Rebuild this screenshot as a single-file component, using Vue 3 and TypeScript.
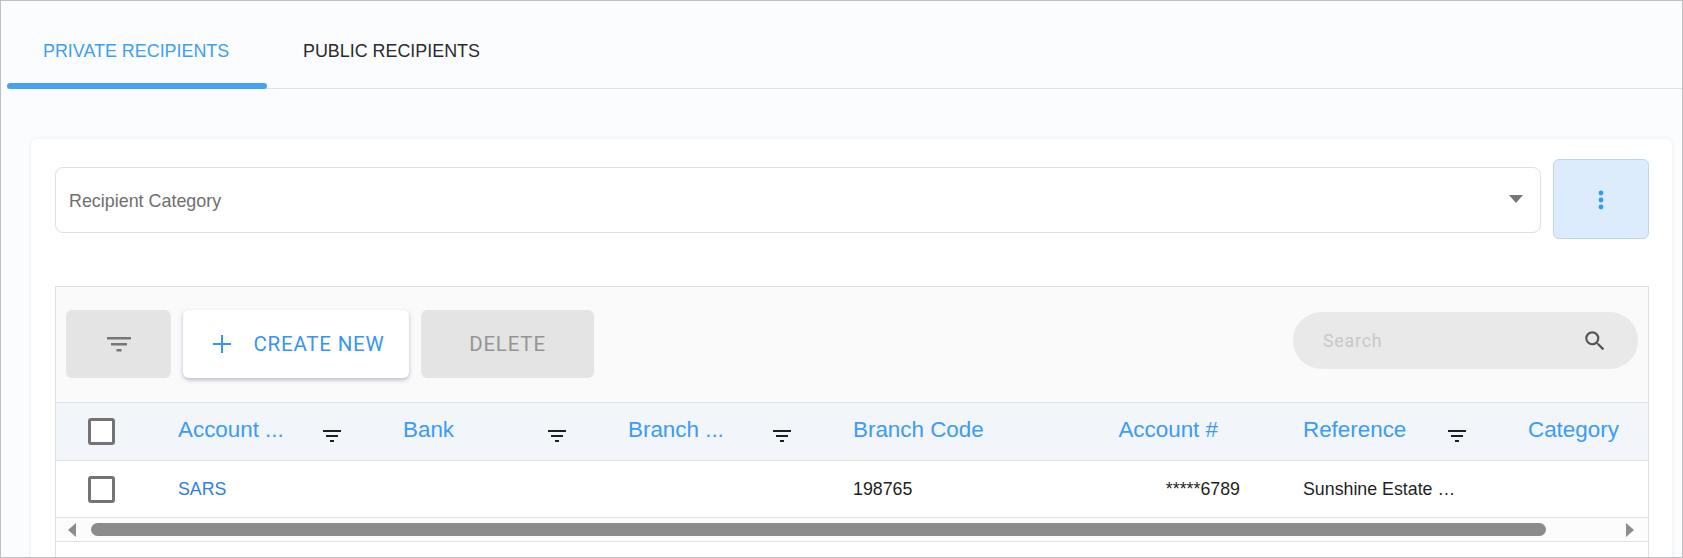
<script setup lang="ts">
interface Col { label: string; width: number; filter?: boolean; right?: boolean; value?: string; link?: boolean }
const cols: Col[] = [
  { label: 'Account ...', width: 225, filter: true, value: 'SARS', link: true },
  { label: 'Bank', width: 225, filter: true },
  { label: 'Branch ...', width: 225, filter: true },
  { label: 'Branch Code', width: 225, value: '198765' },
  { label: 'Account #', width: 225, right: true, value: '*****6789' },
  { label: 'Reference', width: 225, filter: true, value: 'Sunshine Estate …' },
  { label: 'Category', width: 121 },
]
</script>

<template>
  <div class="page">
    <div class="tabs">
      <div class="tab active">PRIVATE RECIPIENTS</div>
      <div class="tab">PUBLIC RECIPIENTS</div>
    </div>
    <section class="card">
      <div class="top-row">
        <div class="select">
          <span class="select-label">Recipient Category</span>
          <i class="caret"></i>
        </div>
        <button class="kebab" type="button" aria-label="More">
          <svg width="6" height="20" viewBox="0 0 6 20"><circle cx="3" cy="3" r="2.4" /><circle cx="3" cy="10" r="2.4" /><circle cx="3" cy="17" r="2.4" /></svg>
        </button>
      </div>
      <div class="grid">
        <div class="toolbar">
          <button class="btn btn-filter" type="button" aria-label="Filter">
            <svg width="24" height="16" viewBox="0 0 24 16"><path d="M0 1h24v2.400H0zM4 7h16v2.400H4zM9.500 13h5v2.400h-5z" /></svg>
          </button>
          <button class="btn btn-create" type="button">
            <svg width="18" height="18" viewBox="0 0 18 18"><path d="M8 0h2v8h8v2h-8v8H8v-8H0V8h8z" /></svg>
            <span>CREATE NEW</span>
          </button>
          <button class="btn btn-delete" type="button">DELETE</button>
          <div class="search">
            <span>Search</span>
            <svg width="26" height="26" viewBox="0 0 24 24"><path d="M15.500 14h-.79l-.28-.27A6.470 6.470 0 0 0 16 9.500 6.500 6.500 0 1 0 9.500 16c1.610 0 3.090-.59 4.230-1.570l.27.28v.79l5 4.990L20.490 19l-4.990-5zm-6 0C7.010 14 5 11.990 5 9.500S7.010 5 9.500 5 14 7.010 14 9.500 11.990 14 9.500 14z" /></svg>
          </div>
        </div>
        <div class="row head">
          <div class="check-cell"><i class="check"></i></div>
          <div v-for="c in cols" :key="c.label" class="cell" :class="{ right: c.right }" :style="{ width: c.width + 'px' }">
            <span class="label">{{ c.label }}</span>
            <svg v-if="c.filter" class="hfilter" width="18" height="14" viewBox="0 0 18 14"><path d="M0 1h18v2H0zM3 6h12v2H3zM7 11h4v2H7z" /></svg>
          </div>
        </div>
        <div class="row body">
          <div class="check-cell"><i class="check"></i></div>
          <div v-for="c in cols" :key="c.label" class="cell" :class="{ right: c.right, link: c.link }" :style="{ width: c.width + 'px' }">{{ c.value }}</div>
        </div>
        <div class="scrollbar">
          <i class="arrow left"></i>
          <div class="track"><div class="thumb"></div></div>
          <i class="arrow rt"></i>
        </div>
      </div>
    </section>
  </div>
</template>

<style>
html, body { margin: 0; padding: 0; overflow: hidden; }
</style>

<style scoped>
.page {
  box-sizing: border-box;
  width: 1683px;
  height: 558px;
  overflow: hidden;
  border: 1px solid #bfc0c2;
  background: #fbfcfe;
  font-family: "Liberation Sans", Arial, sans-serif;
}
.tabs {
  display: flex;
  height: 87px;
  margin-left: 6px;
  border-bottom: 1px solid #dfe1e4;
}
.tab {
  position: relative;
  box-sizing: border-box;
  width: 260px;
  height: 87px;
  padding: 40px 0 0 36px;
  font-size: 17.9px;
  line-height: 20px;
  color: #2b2b2b;
}
.tab.active { color: #3f9ef5; }
.tab.active::after {
  content: "";
  position: absolute;
  left: 0;
  right: 0;
  bottom: -1px;
  height: 6px;
  border-radius: 3px;
  background: #48a2f2;
}
.card {
  margin: 50px 10px 0 30px;
  height: 440px;
  padding: 20px 23px 0 24px;
  background: #fff;
  border-radius: 6px;
  box-shadow: 0 0 5px rgba(0, 0, 0, .07);
}
.top-row {
  display: flex;
  align-items: center;
  gap: 12px;
}
.select {
  flex: 1;
  box-sizing: border-box;
  height: 66px;
  margin-top: 2px;
  display: flex;
  align-items: center;
  justify-content: space-between;
  padding: 0 17px 0 13px;
  border: 1px solid #e0e0e0;
  border-radius: 8px;
  font-size: 17.9px;
  color: #6f6f6f;
}
.select-label { padding-top: 2px; }
.caret {
  width: 0;
  height: 0;
  margin-top: -2px;
  border-left: 7.500px solid transparent;
  border-right: 7.500px solid transparent;
  border-top: 8px solid #777;
}
.kebab {
  box-sizing: border-box;
  width: 96px;
  height: 80px;
  padding: 2px 0 0;
  border: 1px solid #c3d6e8;
  border-radius: 6px;
  background: #dcecfc;
  display: flex;
  align-items: center;
  justify-content: center;
}
.kebab svg { fill: #2f9bf0; }
.grid {
  margin-top: 47px;
  border: 1px solid #dfdfdf;
  border-bottom: 0;
  height: 280px;
}
.toolbar {
  box-sizing: border-box;
  height: 116px;
  background: #fafafa;
  border-bottom: 1px solid #dfe1e4;
  display: flex;
  align-items: center;
  padding: 0 10px 1px;
  gap: 12px;
}
.btn {
  box-sizing: border-box;
  height: 68px;
  border: 0;
  border-radius: 6px;
  font-family: Roboto, sans-serif;
  font-size: 20.500px;
  letter-spacing: .8px;
  padding: 0;
  display: flex;
  align-items: center;
  justify-content: center;
}
.btn-filter { width: 105px; background: #e4e4e4; }
.btn-filter svg { fill: #777; }
.btn-create {
  width: 226px;
  padding-left: 6px;
  background: #fff;
  color: #3596f3;
  gap: 22px;
  box-shadow: 0 2px 4px rgba(70, 60, 130, .35);
}
.btn-create svg { fill: #3596f3; }
.btn-delete { width: 173px; background: #e4e4e4; color: #949494; }
.search {
  box-sizing: border-box;
  align-self: flex-start;
  margin: 25px 0 0 auto;
  width: 345px;
  height: 57px;
  border-radius: 29px;
  background: #e9e9e9;
  display: flex;
  align-items: center;
  justify-content: space-between;
  padding: 0 30px 0 30px;
  font-family: Roboto, sans-serif;
  font-size: 17.800px;
  letter-spacing: .8px;
  color: #c8c8c8;
}
.search svg { fill: #555; }
.row { display: flex; align-items: center; }
.head {
  box-sizing: border-box;
  height: 58px;
  background: #f2f5fa;
  border-bottom: 1px solid #dfe1e4;
  font-size: 22.400px;
  color: #3b9bf7;
}
.head .cell { padding-bottom: 3px; }
.body {
  box-sizing: border-box;
  height: 57px;
  background: #fff;
  border-bottom: 1px solid #e3e3e3;
  font-size: 17.800px;
  color: #1f1f1f;
}
.check-cell {
  flex: none;
  box-sizing: border-box;
  width: 122px;
  padding-left: 32px;
}
.check {
  display: block;
  box-sizing: border-box;
  width: 27px;
  height: 27px;
  border: 3px solid #747474;
  border-radius: 3px;
  background: #fff;
}
.cell {
  flex: none;
  box-sizing: border-box;
  position: relative;
  white-space: nowrap;
}
.cell.right { padding-right: 63px; text-align: right; }
.head .cell.right { padding-right: 85px; }
.cell.link { color: #2f80e0; }
.hfilter {
  position: absolute;
  left: 145px;
  top: 50%;
  margin-top: -3px;
  fill: #1f1f1f;
}
.scrollbar {
  box-sizing: border-box;
  height: 24px;
  background: #fcfcfc;
  border-bottom: 1px solid #e3e3e3;
  display: flex;
  align-items: center;
  padding: 0 14px 0 12px;
}
.track { flex: 1; padding: 0 80px 0 15px; }
.thumb { height: 13px; border-radius: 7px; background: #8c8c8c; }
.arrow { width: 0; height: 0; border-top: 7px solid transparent; border-bottom: 7px solid transparent; }
.arrow.left { border-right: 8px solid #8c8c8c; }
.arrow.rt { border-left: 8px solid #8c8c8c; }
</style>
